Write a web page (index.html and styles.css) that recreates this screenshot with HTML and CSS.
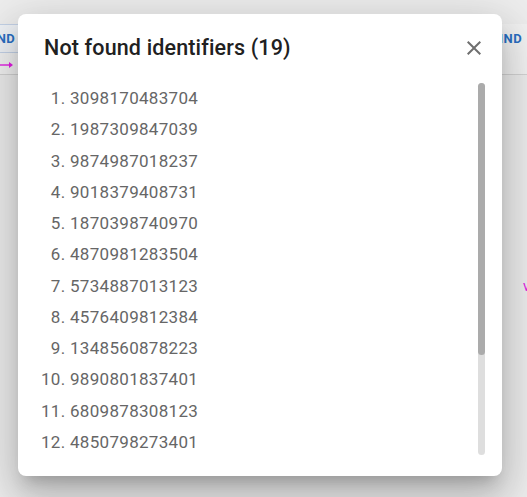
FILE: index.html
```html
<!DOCTYPE html>
<html lang="en">
<head>
<meta charset="utf-8">
<title>Not found identifiers</title>
<link rel="stylesheet" href="styles.css">
</head>
<body>
<div class="page">
  <div class="toolbar">
    <button class="tb-btn tb-left">FIND</button>
    <button class="tb-btn tb-right">FIND</button>
  </div>
  <div class="track-row">
    <span class="arrow">
      <svg width="14" height="8" viewBox="0 0 14 8"><path d="M0 4h10" stroke="#e81ce8" stroke-width="1.4"/><path d="M9 1l4 3-4 3z" fill="#e81ce8"/></svg>
    </span>
  </div>
  <span class="mark">v</span>
</div>

<div class="backdrop">
  <div class="dialog" role="dialog" aria-labelledby="dlg-title">
    <div class="dialog-header">
      <h2 id="dlg-title" class="dialog-title">Not found identifiers (19)</h2>
      <button class="close-btn" aria-label="Close">
        <svg width="24" height="24" viewBox="0 0 24 24"><path d="M19 6.41 17.59 5 12 10.59 6.41 5 5 6.41 10.59 12 5 17.59 6.41 19 12 13.41 17.59 19 19 17.59 13.41 12z" fill="#6f6f6f"/></svg>
      </button>
    </div>
    <div class="dialog-content">
      <ol class="id-list">
        <li>3098170483704</li>
        <li>1987309847039</li>
        <li>9874987018237</li>
        <li>9018379408731</li>
        <li>1870398740970</li>
        <li>4870981283504</li>
        <li>5734887013123</li>
        <li>4576409812384</li>
        <li>1348560878223</li>
        <li>9890801837401</li>
        <li>6809878308123</li>
        <li>4850798273401</li>
        <li>7401983470981</li>
        <li>2309847019283</li>
        <li>8709182374098</li>
        <li>1029384756473</li>
        <li>5647382910384</li>
        <li>3847560192837</li>
        <li>9182736450918</li>
      </ol>
      <div class="scrollbar"><div class="scroll-thumb"></div></div>
    </div>
  </div>
</div>
</body>
</html>
```
FILE: styles.css
```css
html, body {
  margin: 0;
  padding: 0;
}
body {
  width: 527px;
  height: 497px;
  overflow: hidden;
  background: #f2f2f2;
  font-family: Roboto, "Liberation Sans", sans-serif;
  position: relative;
}

.page {
  height: 100%;
  padding-top: 24px;
  box-sizing: border-box;
}
.toolbar {
  display: flex;
  justify-content: space-between;
  border-bottom: 1px solid #d8d8d8;
  background: #f7f7f7;
  height: 51px;
  box-sizing: border-box;
}
.tb-btn {
  font-family: Roboto, "Liberation Sans", sans-serif;
  font-size: 13px;
  font-weight: 700;
  letter-spacing: 0.4px;
  color: #2a72c7;
  background: #f4f7fb;
  border: 1px solid #c8d7ec;
  height: 29px;
  padding: 0 6px;
}
.tb-left {
  margin-left: -22px;
}
.tb-right {
  margin-right: 4px;
  border-color: transparent;
  background: transparent;
  padding: 0;
}
.track-row {
  display: flex;
  margin-top: -14px;
}
.arrow {
  display: block;
  line-height: 0;
}
.mark {
  position: absolute;
  left: 523px;
  top: 278px;
  color: #e81ce8;
  font-size: 14px;
}

.backdrop {
  position: absolute;
  inset: 0;
  background: rgba(0, 0, 0, 0.02);
}
.dialog {
  position: absolute;
  left: 18px;
  top: 14px;
  width: 484px;
  height: 462px;
  background: #fff;
  border-radius: 8px;
  box-shadow: 0 11px 15px -7px rgba(0,0,0,0.2), 0 24px 38px 3px rgba(0,0,0,0.14), 0 9px 46px 8px rgba(0,0,0,0.12);
  display: flex;
  flex-direction: column;
}
.dialog-header {
  display: flex;
  align-items: center;
  justify-content: space-between;
  padding: 14px 8px 0 26px;
  height: 40px;
}
.dialog-title {
  margin: 0;
  font-size: 21.5px;
  font-weight: 500;
  line-height: 32px;
  color: #212121;
  letter-spacing: 0.15px;
}
.close-btn {
  width: 40px;
  height: 40px;
  border: 0;
  background: transparent;
  padding: 8px;
  display: flex;
  align-items: center;
  justify-content: center;
}
.dialog-content {
  position: relative;
  margin-top: 15px;
  height: 376px;
  overflow: hidden;
}
.id-list {
  margin: 0;
  padding: 0 0 0 52px;
  font-size: 17px;
  line-height: 31.27px;
  color: #666666;
  letter-spacing: 0.3px;
}
.scrollbar {
  position: absolute;
  right: 17px;
  top: 0;
  width: 7px;
  height: 372px;
  border-radius: 4px;
  background: #dedede;
}
.scroll-thumb {
  height: 272px;
  border-radius: 4px;
  background: #ababab;
}
```
